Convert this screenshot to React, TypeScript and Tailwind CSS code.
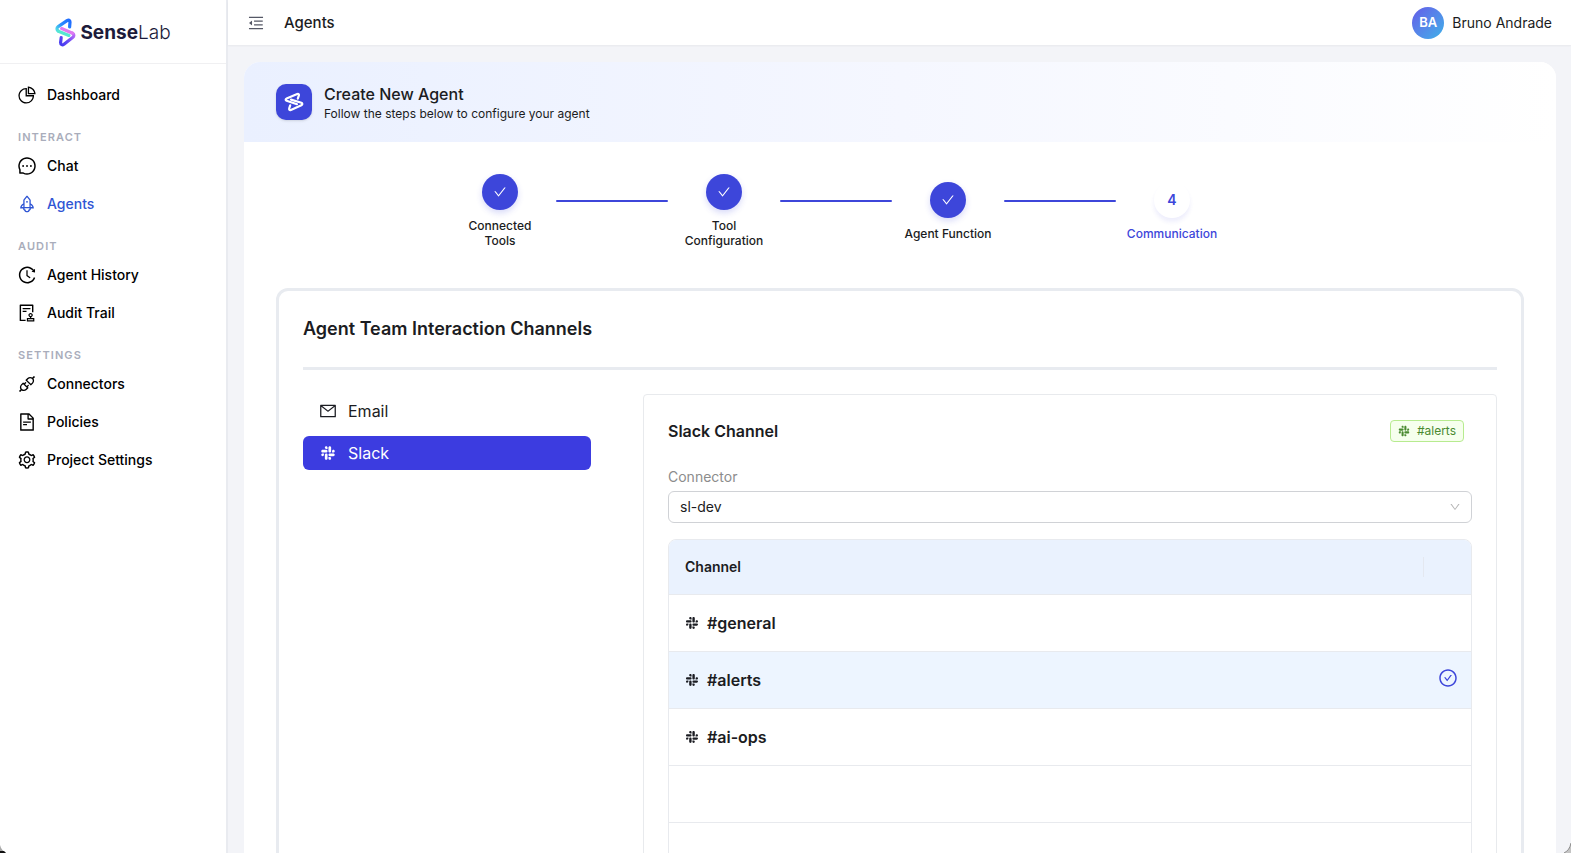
import { clsx } from "clsx";
import { useState } from "react";
import type { IconType } from "react-icons";
import {
  AiOutlineApi,
  AiOutlineAudit,
  AiOutlineCheck,
  AiOutlineCheckCircle,
  AiOutlineDown,
  AiOutlineFileText,
  AiOutlineHistory,
  AiOutlineMail,
  AiOutlineMenuFold,
  AiOutlineMessage,
  AiOutlinePieChart,
  AiOutlineRocket,
  AiOutlineSetting,
  AiOutlineSlack,
} from "react-icons/ai";

type NavItem = { label: string; icon: IconType };
type NavSection = { title?: string; items: NavItem[] };

const NAV_SECTIONS: NavSection[] = [
  { items: [{ label: "Dashboard", icon: AiOutlinePieChart }] },
  {
    title: "Interact",
    items: [
      { label: "Chat", icon: AiOutlineMessage },
      { label: "Agents", icon: AiOutlineRocket },
    ],
  },
  {
    title: "Audit",
    items: [
      { label: "Agent History", icon: AiOutlineHistory },
      { label: "Audit Trail", icon: AiOutlineAudit },
    ],
  },
  {
    title: "Settings",
    items: [
      { label: "Connectors", icon: AiOutlineApi },
      { label: "Policies", icon: AiOutlineFileText },
      { label: "Project Settings", icon: AiOutlineSetting },
    ],
  },
];

const STEPS = ["Connected Tools", "Tool Configuration", "Agent Function", "Communication"];
const CURRENT_STEP = 3;

const CHANNELS = ["#general", "#alerts", "#ai-ops", "", ""];

export default function App() {
  return (
    <div className="flex h-screen overflow-hidden bg-[#f3f4f8] font-['Inter',sans-serif] text-[#1b1c22]">
      <Sidebar />
      <div className="flex min-w-0 flex-1 flex-col">
        <TopBar />
        <main className="min-h-0 flex-1 overflow-y-auto pt-[17px] pr-[15px] pl-4 [scrollbar-width:none]">
          <div className="min-h-full overflow-hidden rounded-t-2xl bg-white">
            <PageBanner />
            <div className="px-8">
              <Stepper />
              <ChannelsPanel />
            </div>
          </div>
        </main>
      </div>
      <WindowCorners />
    </div>
  );
}

function Sidebar() {
  return (
    <aside className="w-[228px] shrink-0 border-r-2 border-[#e9ebf0] bg-white">
      <div className="flex h-16 items-center justify-center gap-1 border-b border-[#f0f0f2] pt-0.5">
        <LogoMark />
        <span className="text-[19px] leading-7 text-[#1c1b3a]">
          <span className="font-bold">Sense</span>
          <span className="font-light">Lab</span>
        </span>
      </div>
      <nav className="pt-3">
        {NAV_SECTIONS.map((section, index) => (
          <div key={index}>
            {section.title && (
              <h2 className="mt-[13px] pl-[18px] text-[11px] leading-5 font-semibold tracking-widest text-[#a9adbb] uppercase">
                {section.title}
              </h2>
            )}
            {section.items.map(({ label, icon: Icon }) => (
              <a
                key={label}
                href="#"
                className={clsx(
                  "flex h-[38px] items-center gap-2.5 pl-[17px] text-sm font-medium",
                  label === "Agents" ? "text-[#2f55d4]" : "text-black",
                )}
              >
                <Icon className="size-5 shrink-0" />
                {label}
              </a>
            ))}
          </div>
        ))}
      </nav>
    </aside>
  );
}

function TopBar() {
  return (
    <header className="flex h-[45px] shrink-0 items-center bg-white pt-px pr-[19px] pl-[19px] shadow-xs">
      <button type="button" aria-label="Collapse menu" className="text-[#555866]">
        <AiOutlineMenuFold className="size-[18px]" />
      </button>
      <h1 className="ml-[19px] text-[15px] leading-7 font-medium">Agents</h1>
      <div className="ml-auto flex items-center gap-2">
        <span className="flex size-8 items-center justify-center rounded-full bg-linear-to-br from-[#6259e8] to-[#38b0e8] text-[13px] font-semibold text-white">
          BA
        </span>
        <span className="text-sm">Bruno Andrade</span>
      </div>
    </header>
  );
}

function PageBanner() {
  return (
    <div className="flex h-20 items-center gap-3 bg-linear-to-r from-[#eaf0ff] via-[#f5f7ff] to-white px-8">
      <span className="flex size-9 items-center justify-center rounded-[10px] bg-[#3d46da] shadow-sm">
        <AgentMark />
      </span>
      <div>
        <h2 className="text-base leading-6 font-medium">Create New Agent</h2>
        <p className="text-xs leading-4">Follow the steps below to configure your agent</p>
      </div>
    </div>
  );
}

function Stepper() {
  return (
    <ol className="flex h-[146px] max-w-[1120px] justify-center pt-8">
      {STEPS.map((step, index) => {
        const isCurrent = index === CURRENT_STEP;
        return (
          <li key={step} className="flex h-[74px] items-center">
            {index > 0 && <span className="mb-5 h-0.5 w-28 rounded-full bg-[#3d46da]" />}
            <div className="flex w-28 flex-col items-center gap-2">
              <span
                className={clsx(
                  "flex size-9 items-center justify-center rounded-full text-sm font-semibold",
                  isCurrent
                    ? "bg-white text-[#3d46da] shadow-[0_4px_4px_rgba(61,70,218,0.09)]"
                    : "bg-[#3d46da] text-white shadow-[0_3px_6px_rgba(61,70,218,0.2)]",
                )}
              >
                {isCurrent ? index + 1 : <AiOutlineCheck className="size-[14px]" />}
              </span>
              <span
                className={clsx(
                  "w-[92px] text-center text-xs leading-[15px] font-medium",
                  isCurrent && "text-[#3d46da]",
                )}
              >
                {step}
              </span>
            </div>
          </li>
        );
      })}
    </ol>
  );
}

function ChannelsPanel() {
  const [activeTab, setActiveTab] = useState("Slack");

  return (
    <section className="rounded-xl border-3 border-[#e8ebf0] p-6">
      <h2 className="border-b-3 border-[#e8ebf0] pb-6 text-lg leading-7 font-semibold">
        Agent Team Interaction Channels
      </h2>
      <div className="flex gap-[52px] pt-6">
        <div className="flex w-72 shrink-0 flex-col gap-2">
          <ChannelTab label="Email" icon={AiOutlineMail} isActive={activeTab === "Email"} onSelect={setActiveTab} />
          <ChannelTab label="Slack" icon={AiOutlineSlack} isActive={activeTab === "Slack"} onSelect={setActiveTab} />
        </div>
        <SlackChannelCard />
      </div>
    </section>
  );
}

type ChannelTabProps = {
  label: string;
  icon: IconType;
  isActive: boolean;
  onSelect: (label: string) => void;
};

function ChannelTab({ label, icon: Icon, isActive, onSelect }: ChannelTabProps) {
  return (
    <button
      type="button"
      onClick={() => onSelect(label)}
      className={clsx(
        "flex h-[34px] items-center gap-[11px] rounded-md px-4 text-base",
        isActive && "bg-[#3c3ce0] text-white",
      )}
    >
      <Icon className="size-[18px]" />
      {label}
    </button>
  );
}

function SlackChannelCard() {
  const [selected, setSelected] = useState("#alerts");

  return (
    <div className="min-w-0 flex-1 rounded-sm border border-[#e8eaed] p-6">
      <div className="flex h-6 items-center justify-between pr-2">
        <h3 className="text-base font-semibold">Slack Channel</h3>
        <span className="flex h-[22px] items-center gap-1.5 rounded-sm border border-[#b7eb8f] bg-[#f6ffed] pr-[7px] pl-1.5 text-xs text-[#4a8a30]">
          <AiOutlineSlack className="size-[14px]" />
          {selected}
        </span>
      </div>
      <label htmlFor="connector" className="mt-[22px] mb-0.5 block text-sm leading-6 text-[#8c8c8c]">
        Connector
      </label>
      <div className="relative">
        <select
          id="connector"
          className="h-8 w-full appearance-none rounded-md border border-[#d0d2d6] bg-white px-[11px] text-sm"
        >
          <option>sl-dev</option>
        </select>
        <AiOutlineDown className="pointer-events-none absolute top-2.5 right-[11px] size-3 text-[#b5b5b5]" />
      </div>
      <div className="mt-4 overflow-hidden rounded-t-lg border border-[#e8eaee]">
        <table className="w-full table-fixed border-separate border-spacing-0 text-left">
          <thead className="bg-[#eaf2fe]">
            <tr>
              <th className="h-[55px] border-b border-[#e8eaee] pl-4 text-sm font-semibold">Channel</th>
              <th className="w-12 border-b border-[#e8eaee]">
                <span className="block h-5 border-l border-[#e4e8f0]" />
              </th>
            </tr>
          </thead>
          <tbody>
            {CHANNELS.map((channel, index) => {
              const isSelected = channel === selected;
              return (
                <tr
                  key={index}
                  onClick={() => channel && setSelected(channel)}
                  className={clsx(isSelected && "bg-[#edf5ff]")}
                >
                  <td className="h-[57px] border-b border-[#e8eaee] pl-[15px]">
                    {channel && (
                      <span className="flex items-center gap-[7px] text-base font-semibold">
                        <AiOutlineSlack className="size-4" />
                        {channel}
                      </span>
                    )}
                  </td>
                  <td className="border-b border-[#e8eaee] pb-1 pl-[15px]">
                    {isSelected && <AiOutlineCheckCircle className="size-5 text-[#3d46da]" />}
                  </td>
                </tr>
              );
            })}
          </tbody>
        </table>
      </div>
    </div>
  );
}

function LogoMark() {
  return (
    <svg width="21" height="29" viewBox="0 0 21 29" fill="none" strokeWidth="3.2" strokeLinecap="round" strokeLinejoin="round">
      <defs>
        <linearGradient id="logo-top" x1="15" y1="2" x2="2" y2="12" gradientUnits="userSpaceOnUse">
          <stop stopColor="#1f6bff" />
          <stop offset="0.6" stopColor="#2b8cff" />
          <stop offset="1" stopColor="#4fd8e8" />
        </linearGradient>
        <linearGradient id="logo-bottom" x1="19" y1="16" x2="6" y2="27" gradientUnits="userSpaceOnUse">
          <stop stopColor="#c06cf5" />
          <stop offset="0.5" stopColor="#6a4cf5" />
          <stop offset="1" stopColor="#4338f0" />
        </linearGradient>
      </defs>
      <path d="M14.6 9L15 4C15 2 13.6 1.6 12 2.6L3.2 8.6C1.4 10 1.6 12 3.4 13.2" stroke="url(#logo-top)" />
      <path d="M6.2 19.6L5.6 24.6C5.6 26.8 7.4 27.3 9 26.2L17.6 19.6C19.4 18.2 19.2 16.4 17.6 15.2" stroke="url(#logo-bottom)" />
      <path d="M3.4 13.2L14 17.4" stroke="#56e6d2" />
      <path d="M6.6 10.6L17.6 15.2" stroke="#e07af0" />
    </svg>
  );
}

function AgentMark() {
  return (
    <svg width="20" height="20" viewBox="0 0 20 20" fill="none" stroke="#fff" strokeWidth="2.2" strokeLinecap="round" strokeLinejoin="round">
      <path d="M13.8 6.6L14.9 3.4C15.2 2 14.4 1.6 13.2 2L2.6 6.4C1.3 7 1.4 8.4 2.6 8.8L13 12.2" />
      <path d="M6.2 13.4L5.2 16.4C4.8 17.9 5.7 18.4 6.9 17.9L17.4 13.2C18.7 12.6 18.6 11.2 17.4 10.8L7 7.6" />
    </svg>
  );
}

// rounded corners of the desktop window behind the page
function WindowCorners() {
  return (
    <>
      <svg className="fixed bottom-0 left-0" width="8" height="8" viewBox="0 0 8 8">
        <path d="M0 0C1 4 3 6 6 8H0Z" fill="#a8a8a8" />
        <path d="M0 6L4 6L6 8H0Z" fill="#111" />
      </svg>
      <svg className="fixed right-0 bottom-0" width="8" height="10" viewBox="0 0 8 10">
        <path d="M8 0C7 5 5 8 1 10H8Z" fill="#c4c4c4" />
        <path d="M8 0C7 5 5 8 1 10" fill="none" stroke="#8a8a8a" />
      </svg>
    </>
  );
}
